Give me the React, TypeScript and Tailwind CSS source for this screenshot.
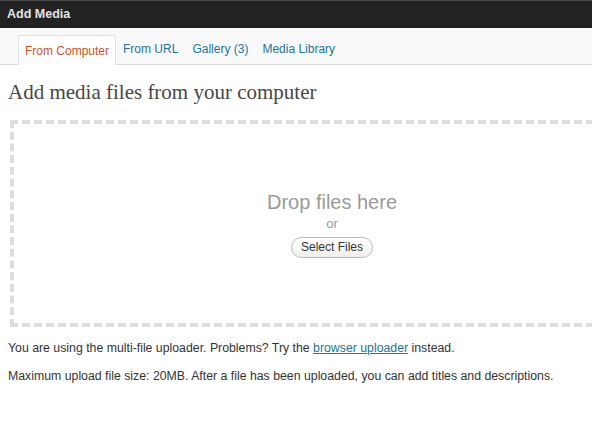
export default function App() {
  const tabs = ['From URL', 'Gallery (3)', 'Media Library'];

  return (
    <div className="w-[592px] h-[444px] overflow-hidden bg-white font-['Liberation_Sans',Arial,sans-serif]">
      {/* Title bar */}
      <div className="h-[28px] bg-[#222222] border-t border-[#4a4a4a] flex items-center px-[7px]">
        <span className="text-[12.5px] font-bold text-[#e4e4e4]">Add Media</span>
      </div>

      {/* Tabs */}
      <div className="h-[37px] bg-[#f9f9f9] border-b border-[#dfdfdf] flex items-end pl-[18px]">
        <div className="h-[30px] px-[6px] flex items-center bg-white border border-b-0 border-[#dfdfdf] rounded-t-[3px] -mb-px text-[12px] text-[#d54e21]">
          From Computer
        </div>
        {tabs.map((t) => (
          <div key={t} className="h-[30px] px-[7px] flex items-center text-[12px] text-[#21759b]">
            {t}
          </div>
        ))}
      </div>

      {/* Heading */}
      <h2 className="pl-[8px] pt-[15px] text-[21px] leading-[24px] text-[#464646] font-['Liberation_Serif',Georgia,serif]">
        Add media files from your computer
      </h2>

      {/* Drop zone */}
      <div className="ml-[10px] mt-[16px] w-[644px] h-[207px] border-4 border-dashed border-[#dddddd] flex flex-col items-center justify-center">
        <div className="text-[20px] leading-[24px] text-[#9a9a9a]">Drop files here</div>
        <div className="text-[13px] leading-[16px] text-[#9a9a9a] mt-[2px]">or</div>
        <button className="mt-[5px] h-[21px] px-[9px] rounded-full border border-[#bbbbbb] bg-gradient-to-b from-white to-[#efefef] text-[12px] text-[#333333]">
          Select Files
        </button>
      </div>

      {/* Info */}
      <div className="pl-[8px] pt-[13px] text-[12.3px] text-[#333333]">
        <p className="leading-[16px]">
          You are using the multi-file uploader. Problems? Try the{' '}
          <a href="#" className="text-[#21759b] underline">browser uploader</a> instead.
        </p>
        <p className="leading-[16px] mt-[12px]">
          Maximum upload file size: 20MB. After a file has been uploaded, you can add titles and descriptions.
        </p>
      </div>
    </div>
  );
}
